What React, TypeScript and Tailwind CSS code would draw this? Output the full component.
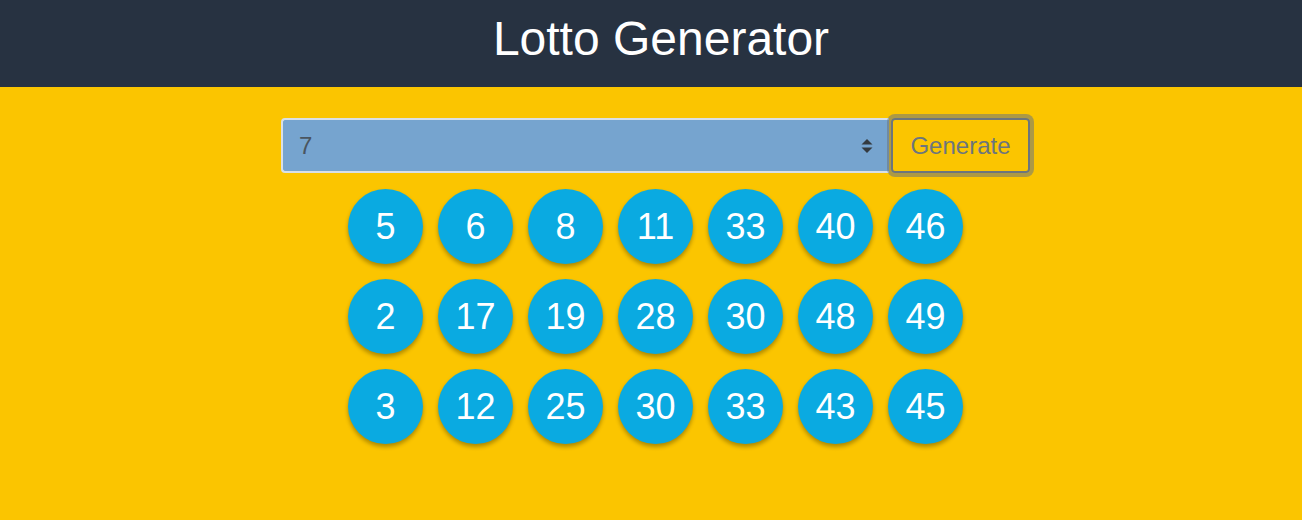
import React from 'react';

const rows = [
  [5, 6, 8, 11, 33, 40, 46],
  [2, 17, 19, 28, 30, 48, 49],
  [3, 12, 25, 30, 33, 43, 45],
];

function Ball({ n }: { n: number }) {
  return (
    <div className="w-[75px] h-[75px] rounded-full bg-[#0aaae1] text-white text-[36px] flex items-center justify-center shadow-[0_3px_4px_rgba(0,0,0,0.3)]">
      {n}
    </div>
  );
}

export default function App() {
  return (
    <div className="min-h-[520px] bg-[#fbc500] font-['Liberation_Sans',Arial,sans-serif]">
      <header className="h-[87px] bg-[#273241] flex items-center justify-center">
        <h1 className="text-white text-[48px] leading-none pl-[20px] -mt-[10px]">Lotto Generator</h1>
      </header>
      <div className="flex flex-col items-center pt-[31px] pl-[9px]">
        <div className="flex w-[749px] h-[55px]">
          <div className="flex-1 flex items-center justify-between bg-[#76a4cf] border-2 border-[#d9e0e6] border-r-0 rounded-l-[4px] pl-[16px] pr-[16px] text-[24px] text-[#4a5560]">
            <span>7</span>
            <svg width="12" height="16" viewBox="0 0 12 16">
              <path d="M6 1 L11.5 6.5 H0.5 Z" fill="#343a40" />
              <path d="M6 15 L11.5 9.5 H0.5 Z" fill="#343a40" />
            </svg>
          </div>
          <button className="ml-[2px] w-[139px] h-[55px] border-2 border-[#6c757d] rounded-[4px] text-[#6c757d] text-[24px] shadow-[0_0_0_4px_rgba(108,117,125,0.55)]">
            Generate
          </button>
        </div>
        <div className="flex flex-col gap-[15px] mt-[16px]">
          {rows.map((r, i) => (
            <div key={i} className="flex gap-[15px]">
              {r.map((n, j) => (
                <Ball key={j} n={n} />
              ))}
            </div>
          ))}
        </div>
      </div>
    </div>
  );
}
